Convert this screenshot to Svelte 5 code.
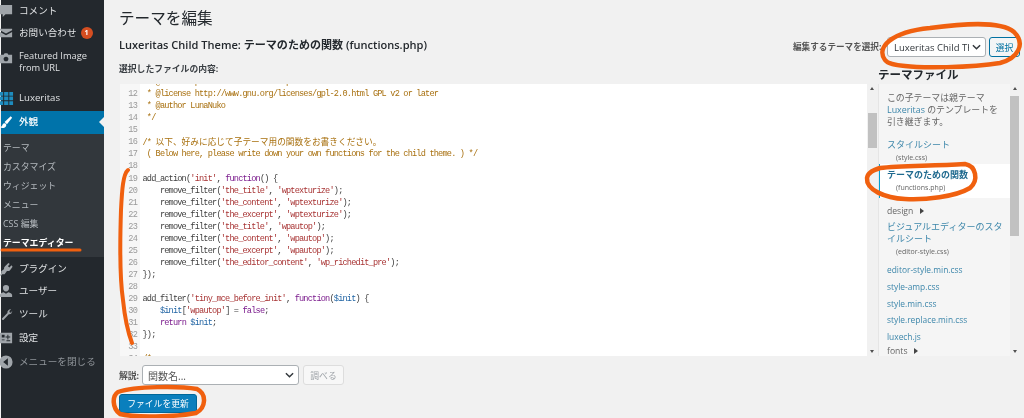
<script>
  const top1 = [
    { label: 'コメント', icon: 'comment' },
    { label: 'お問い合わせ', icon: 'mail', badge: '1' },
    { label: 'Featured Image from URL', icon: 'camera', tall: true }
  ];

  const submenu = ['テーマ', 'カスタマイズ', 'ウィジェット', 'メニュー', 'CSS 編集'];

  const bottom = [
    { label: 'プラグイン', icon: 'plug' },
    { label: 'ユーザー', icon: 'user' },
    { label: 'ツール', icon: 'wrench' },
    { label: '設定', icon: 'settings' }
  ];

  const icons = {
    comment: 'M2 2h13v10H8l-3 3v-3H2z',
    mail: 'M2 4h13v1.5L8.5 9 2 5.5zM2 7.5l6.5 3.5L15 7.5V13H2z',
    camera: 'M2 4h4l1-1.500h3L11 4h4v9H2zM8.500 6a2.500 2.500 0 1 0 .01 0z',
    plug: 'M11 2l1.500 1.200-2 2.500 1.700 1.300 2-2.500L15.500 6 13 9.500c-1 1.300-2.500 1.500-3.500 1L7 14H4.500l-1.500 2-1-1 1.500-2v-2L6.500 8.500c-.3-1 0-2 1-3z',
    user: 'M8.500 2a3.200 3.200 0 0 1 3.200 3.500c0 2-1.400 3.500-3.200 3.500S5.300 7.500 5.300 5.500A3.200 3.200 0 0 1 8.500 2zM2 12.500c1-2 3-2.500 4-2.700l2.500 1.700 2.500-1.700c1 .2 3 .7 4 2.700V15H2z',
    wrench: 'M15 5c.4 2-1.200 4-3.500 3.800L6 14.500c-1 .9-2.500-.5-1.500-1.600L10 7.400C9.700 5 11.700 3 14 3.400l-2 2 .5 1.500 1.500.4z',
    settings: 'M2 3h13v11H2zM4 5v3h3V5zM10 5v2H8v1h2v2h1V8h2V7h-2V5zM4 10v1h3v-1zM9 11v1h4v-1z'
  };

  // one line = list of [class, text]
  const code = [
    [11, [['c', ' * @link https://thk.kanzae.net/wp/']]],
    [12, [['c', ' * @license http://www.gnu.org/licenses/gpl-2.0.html GPL v2 or later']]],
    [13, [['c', ' * @author LunaNuko']]],
    [14, [['c', ' */']]],
    [15, []],
    [16, [['c', '/* '], ['c j', '以下、好みに応じて子テーマ用の関数をお書きください。']]],
    [17, [['c', ' ( Below here, please write down your own functions for the child theme. ) */']]],
    [18, []],
    [19, [['t', 'add_action('], ['s', "'init'"], ['t', ', '], ['k', 'function'], ['t', '() {']]],
    [20, [['t', "    remove_filter("], ['s', "'the_title'"], ['t', ', '], ['s', "'wptexturize'"], ['t', ');']]],
    [21, [['t', "    remove_filter("], ['s', "'the_content'"], ['t', ', '], ['s', "'wptexturize'"], ['t', ');']]],
    [22, [['t', "    remove_filter("], ['s', "'the_excerpt'"], ['t', ', '], ['s', "'wptexturize'"], ['t', ');']]],
    [23, [['t', "    remove_filter("], ['s', "'the_title'"], ['t', ', '], ['s', "'wpautop'"], ['t', ');']]],
    [24, [['t', "    remove_filter("], ['s', "'the_content'"], ['t', ', '], ['s', "'wpautop'"], ['t', ');']]],
    [25, [['t', "    remove_filter("], ['s', "'the_excerpt'"], ['t', ', '], ['s', "'wpautop'"], ['t', ');']]],
    [26, [['t', "    remove_filter("], ['s', "'the_editor_content'"], ['t', ', '], ['s', "'wp_richedit_pre'"], ['t', ');']]],
    [27, [['t', '});']]],
    [28, []],
    [29, [['t', 'add_filter('], ['s', "'tiny_mce_before_init'"], ['t', ', '], ['k', 'function'], ['t', '('], ['v', '$init'], ['t', ') {']]],
    [30, [['t', '    '], ['v', '$init'], ['t', '['], ['s', "'wpautop'"], ['t', '] = '], ['k', 'false'], ['t', ';']]],
    [31, [['t', '    '], ['k', 'return'], ['t', ' '], ['v', '$init'], ['t', ';']]],
    [32, [['t', '});']]],
    [33, []],
    [34, [['c', '/*']]]
  ];

  const cssFiles = ['editor-style.min.css', 'style-amp.css', 'style.min.css', 'style.replace.min.css', 'luxech.js'];
</script>

<div class="app">
  <nav class="sidebar">
    {#each top1 as item}
      <div class="menu-item" class:tall={item.tall}>
        <svg class="ico" viewBox="0 0 17 17"><path d={icons[item.icon]} fill-rule="evenodd" /></svg>
        <span class="menu-label">{item.label}{#if item.badge}<b class="badge">{item.badge}</b>{/if}</span>
      </div>
    {/each}

    <div class="menu-item lux">
      <svg class="ico" viewBox="0 0 17 17">
        <path class="blue" d="M1 2h4.500v4H1zM6.500 2H11v4H6.500zM12 2h4v4h-4zM1 7h4.500v4H1zM6.500 7H11v4H6.500zM12 7h4v4h-4zM1 12h4.500v4H1zM6.500 12H11v4H6.500zM12 12h4v4h-4z" />
      </svg>
      <span class="menu-label">Luxeritas</span>
    </div>

    <div class="menu-item current">
      <svg class="ico white" viewBox="0 0 17 17">
        <path d="M2 14c2-.3 2.500-1.500 3-3 .5-1 1.800-1.500 3-.8 1 .7 1 2 .3 3C7 15 4 15.500 2 14zM7 8.500L13.500 2.500 15 4l-5.500 6.800z" />
      </svg>
      <span class="menu-label">外観</span>
      <i class="notch"></i>
    </div>

    <div class="submenu">
      {#each submenu as sub}
        <div class="sub-item">{sub}</div>
      {/each}
      <div class="sub-item active">テーマエディター</div>
    </div>

    <div class="bottom-items">
      {#each bottom as item}
        <div class="menu-item">
          <svg class="ico" viewBox="0 0 17 17"><path d={icons[item.icon]} fill-rule="evenodd" /></svg>
          <span class="menu-label">{item.label}</span>
        </div>
      {/each}
      <div class="menu-item collapse">
        <svg class="ico" viewBox="0 0 17 17">
          <path d="M8.500 1.500a7 7 0 1 1 0 14 7 7 0 0 1 0-14zM10.500 4.500L5.500 8.500l5 4z" fill-rule="evenodd" />
        </svg>
        <span class="menu-label">メニューを閉じる</span>
      </div>
    </div>
  </nav>

  <main class="content">
    <h1>テーマを編集</h1>

    <div class="head-row">
      <h2>Luxeritas Child Theme: <strong>テーマのための関数</strong> (functions.php)</h2>
      <div class="theme-pick">
        <span class="pick-label">編集するテーマを選択:</span>
        <div class="select theme-select">
          <span class="select-text">Luxeritas Child Theme</span>
          <svg class="chev" viewBox="0 0 10 6"><path d="M1 1l4 4 4-4" /></svg>
        </div>
        <button class="btn" type="button">選択</button>
      </div>
    </div>

    <div class="columns">
      <div class="editor-col">
        <div class="col-label">選択したファイルの内容:</div>
        <div class="editor">
          <div class="gutter-bg"></div>
          <div class="lines">
            {#each code as [num, parts]}
              <div class="line">
                <span class="num">{num}</span>
                <span class="src">{#each parts as [cls, text]}<span class={cls}>{text}</span>{/each}</span>
              </div>
            {/each}
          </div>
          <div class="scrollbar">
            <i class="arrow up"></i>
            <i class="thumb editor-thumb"></i>
            <i class="arrow down"></i>
          </div>
        </div>
      </div>

      <aside class="files-col">
        <div class="files-title">テーマファイル</div>
        <div class="files">
          <div class="files-list">
            <p class="note">この子テーマは親テーマ<br /><span class="link">Luxeritas</span> のテンプレートを<br />引き継ぎます。</p>

            <div class="file first">
              <div class="link jp">スタイルシート</div>
              <div class="fname">(style.css)</div>
            </div>
            <div class="file selected">
              <div class="jp strong">テーマのための関数</div>
              <div class="fname">(functions.php)</div>
            </div>
            <div class="folder">design <i class="tri"></i></div>
            <div class="file vis">
              <div class="link jp">ビジュアルエディターのスタ<br />イルシート</div>
              <div class="fname">(editor-style.css)</div>
            </div>
            {#each cssFiles as f}
              <div class="plain link">{f}</div>
            {/each}
            <div class="folder last">fonts <i class="tri"></i></div>
          </div>
          <div class="scrollbar side">
            <i class="arrow up"></i>
            <i class="thumb files-thumb"></i>
            <i class="arrow down"></i>
          </div>
        </div>
      </aside>
    </div>

    <div class="doc-row">
      <span class="doc-label">解説:</span>
      <div class="select doc-select">
        <span class="select-text">関数名...</span>
        <svg class="chev" viewBox="0 0 10 6"><path d="M1 1l4 4 4-4" /></svg>
      </div>
      <button class="btn disabled" type="button">調べる</button>
    </div>

    <button class="primary" type="button">ファイルを更新</button>
  </main>

  <svg class="marks" viewBox="0 0 1024 418">
    <path class="thin" d="M2 250H80" />
    <path class="mid" d="M128 170C123 174 122 190 121 210C120 240 120 280 123 300C125 320 129 335 132 343" />
    <path d="M885 60C876 48 890 32 930 28C960 24 1000 20 1014 32C1026 44 1018 58 1000 63C970 68 920 68 905 66C895 65 888 64 885 60Z" />
    <path d="M880 168C900 166 930 166 965 164C976 166 979 180 970 188C955 197 925 200 905 199C885 198 866 190 867 178C868 172 874 170 880 168Z" />
    <path d="M118 392C135 386 180 386 197 389C207 394 206 408 196 413C175 417 135 418 120 414C112 408 112 396 118 392Z" />
  </svg>
</div>

<style>
  :global(body) {
    margin: 0;
    background: #f1f1f1;
  }

  .app {
    position: relative;
    display: flex;
    width: 1024px;
    height: 418px;
    overflow: hidden;
    background: #f1f1f1;
    font-family: "Open Sans", "Noto Sans CJK JP", sans-serif;
    color: #444;
    filter: blur(0.4px);
  }

  /* sidebar */
  .sidebar {
    flex: 0 0 103px;
    margin-left: 1px;
    background: #23282d;
    color: #dfe1e3;
    font-size: 9.600px;
    display: flex;
    flex-direction: column;
  }

  .menu-item {
    position: relative;
    display: flex;
    align-items: center;
    height: 23.600px;
    padding-left: 18px;
    line-height: 12px;
  }

  .menu-item:first-child {
    height: 21px;
  }

  .menu-item.tall {
    height: 36px;
    margin-top: -1px;
    font-size: 9.300px;
  }

  .menu-item.lux {
    margin-top: 6px;
    height: 25px;
  }

  .menu-item.current {
    height: 23px;
    background: #0073aa;
    color: #fff;
    font-weight: 500;
  }

  .ico {
    position: absolute;
    left: -3px;
    top: 50%;
    width: 16px;
    height: 16px;
    margin-top: -8px;
    fill: #a0a5aa;
  }

  .ico.white { fill: #fff; }
  .blue { fill: #1e8cbe; }

  .tall .ico { top: 10px; margin-top: -3px; }

  .menu-label { display: block; }
  .tall .menu-label { width: 74px; }

  .badge {
    display: inline-block;
    width: 12px;
    height: 12px;
    margin-left: 4px;
    border-radius: 50%;
    background: #d54e21;
    color: #fff;
    font-size: 7px;
    line-height: 12px;
    text-align: center;
    vertical-align: top;
  }

  .notch {
    position: absolute;
    right: 0;
    top: 50%;
    margin-top: -5px;
    border: 5px solid transparent;
    border-right-color: #f1f1f1;
    border-left-width: 0;
  }

  .submenu {
    flex: 0 0 123px;
    padding-top: 4.500px;
    box-sizing: border-box;
    background: #32373c;
    color: #b4b9be;
    font-size: 8.900px;
  }

  .sub-item {
    height: 19px;
    padding-left: 2px;
    line-height: 19px;
  }

  .sub-item.active {
    color: #fff;
    font-weight: 700;
  }

  .bottom-items { margin-top: 1.500px; }

  .collapse { color: #8f9499; }
  .collapse .ico { fill: #a0a5aa; }

  /* main column */
  .content {
    flex: 1;
    min-width: 0;
    padding: 8px 4px 0 15px;
  }

  h1 {
    margin: 0;
    height: 20px;
    font-size: 15.600px;
    font-weight: 400;
    line-height: 20px;
    color: #23282d;
  }

  .head-row {
    display: flex;
    justify-content: space-between;
    margin-top: 9px;
    height: 20px;
  }

  h2 {
    margin: 0;
    font-size: 11.050px;
    font-weight: 600;
    line-height: 16px;
    color: #23282d;
  }

  h2 strong { font-weight: 700; }

  .theme-pick {
    display: flex;
    align-items: flex-start;
  }

  .pick-label {
    margin-top: 4px;
    width: 94px;
    white-space: nowrap;
    overflow: hidden;
    font-size: 8.600px;
    font-weight: 700;
    line-height: 12px;
    color: #555;
  }

  .select {
    display: flex;
    align-items: center;
    justify-content: space-between;
    box-sizing: border-box;
    height: 20px;
    background: #fff;
    border: 1px solid #abb0b4;
    border-radius: 3px;
    color: #32373c;
    font-size: 9.500px;
  }

  .select-text {
    flex: 1;
    overflow: hidden;
    white-space: nowrap;
  }

  .theme-select {
    width: 99px;
    padding: 0 4px 0 6px;
  }

  .doc-select {
    width: 157px;
    padding: 0 4px 0 5px;
    color: #555;
    font-size: 10px;
  }

  .chev {
    flex: 0 0 9px;
    width: 9px;
    height: 6px;
    margin-left: 3px;
    fill: none;
    stroke: #32373c;
    stroke-width: 1.600;
  }

  .btn {
    box-sizing: border-box;
    width: 31px;
    height: 20px;
    margin-left: 3px;
    padding: 0;
    background: #f3f5f6;
    border: 1px solid #0071a1;
    border-radius: 3px;
    color: #0071a1;
    font: 8.800px "Noto Sans CJK JP", sans-serif;
  }

  .btn.disabled {
    width: 41px;
    margin-left: 4px;
    background: #f7f7f7;
    border-color: #ddd;
    color: #a0a5aa;
  }

  .columns {
    display: flex;
    margin-top: 3px;
  }

  .editor-col { flex: 0 0 759px; }

  .col-label {
    height: 18px;
    margin-bottom: 6px;
    font-size: 8.800px;
    font-weight: 700;
    line-height: 18px;
    color: #3a3f44;
  }

  /* code editor */
  .editor {
    position: relative;
    box-sizing: border-box;
    height: 272px;
    margin-left: 1px;
    overflow: hidden;
    background: #fff;
  }

  .gutter-bg {
    position: absolute;
    left: 0;
    top: 0;
    bottom: 0;
    width: 20px;
    background: #f7f7f7;
  }

  .lines {
    position: relative;
    margin-top: -8px;
    font-family: "Liberation Mono", "Noto Sans CJK JP", monospace;
    font-size: 8.600px;
    letter-spacing: -0.810px;
    line-height: 12.070px;
  }

  .line {
    display: flex;
    height: 12.070px;
    white-space: pre;
  }

  .num {
    flex: 0 0 17px;
    margin-right: 5.500px;
    text-align: right;
    color: #999;
  }

  .src { flex: 1; }

  .t { color: #3d3d3d; }
  .c { color: #a8700f; }
  .k { color: #7a1a8c; }
  .s { color: #a83434; }
  .v { color: #1f63a3; }
  .j {
    font-family: "Noto Sans CJK JP", sans-serif;
    font-size: 8.700px;
    letter-spacing: 0;
  }

  .scrollbar {
    position: absolute;
    right: 0;
    top: 0;
    bottom: 0;
    width: 11px;
    background: #f1f1f1;
  }

  .arrow {
    position: absolute;
    left: 3px;
    border: 2.500px solid transparent;
  }

  .arrow.up { top: 3px; border-bottom: 3px solid #505050; border-top-width: 0; }
  .arrow.down { bottom: 3px; border-top: 3px solid #505050; border-bottom-width: 0; }

  .thumb {
    position: absolute;
    left: 1px;
    right: 1px;
    background: #c1c1c1;
  }

  .editor-thumb { top: 29px; height: 35px; }

  /* theme file list */
  .files-col { flex: 0 0 142px; }

  .files-title {
    height: 16px;
    margin: 7px 0 1px;
    font-size: 11.500px;
    font-weight: 700;
    line-height: 16px;
    color: #23282d;
  }

  .files {
    position: relative;
    height: 272px;
    overflow: hidden;
    background: #f5f5f5;
    border-left: 1px solid #e5e5e5;
    box-sizing: border-box;
  }

  .files-list {
    padding-top: 8px;
    font-size: 8.900px;
    line-height: 12px;
    color: #666;
  }

  .note {
    margin: 0;
    padding-left: 8px;
  }

  .link { color: #3c86aa; }

  .file, .plain, .folder { padding-left: 8px; }

  .jp { font-size: 9px; }

  .fname {
    padding-left: 9px;
    font-size: 7px;
    line-height: 13px;
    color: #666;
  }

  .first { margin-top: 11px; }

  .selected {
    box-sizing: border-box;
    height: 34px;
    padding-top: 5px;
    padding-left: 7px;
    background: #fff;
    border-left: 2px solid #00a0d2;
    margin-left: -1px;
  }

  .selected .strong {
    font-weight: 700;
    color: #1f6a8f;
  }

  .folder {
    margin-top: 7px;
    font-size: 8.600px;
  }

  .folder.last { margin-top: 0; }

  .tri {
    display: inline-block;
    margin-left: 4px;
    border: 3px solid transparent;
    border-left: 4px solid #444;
    border-right-width: 0;
  }

  .vis { margin-top: 4px; }

  .plain {
    height: 16.800px;
    font-size: 8.400px;
    line-height: 17px;
  }

  .vis + .plain { margin-top: 3px; }

  .scrollbar.side {
    width: 10px;
    background: #f1f1f1;
  }

  .files-thumb { top: 12px; height: 140px; left: 0; right: 1px; }

  /* bottom controls */
  .doc-row {
    display: flex;
    align-items: center;
    margin-top: 9px;
    height: 20px;
  }

  .doc-label {
    width: 23px;
    font-size: 8.800px;
    font-weight: 700;
    color: #555;
  }

  .primary {
    display: block;
    width: 78px;
    height: 19px;
    margin-top: 9px;
    padding: 0;
    background: #0a7fbd;
    border: 1px solid #006799;
    border-radius: 3px;
    color: #fff;
    font: 8.800px "Noto Sans CJK JP", sans-serif;
  }

  /* hand drawn orange marks on top of the screenshot */
  .marks {
    position: absolute;
    inset: 0;
    width: 1024px;
    height: 418px;
    fill: none;
    stroke: #f0600f;
    stroke-width: 4.500;
    stroke-linecap: round;
    pointer-events: none;
  }

  .thin { stroke-width: 3px; }
  .mid { stroke-width: 4px; }
</style>
